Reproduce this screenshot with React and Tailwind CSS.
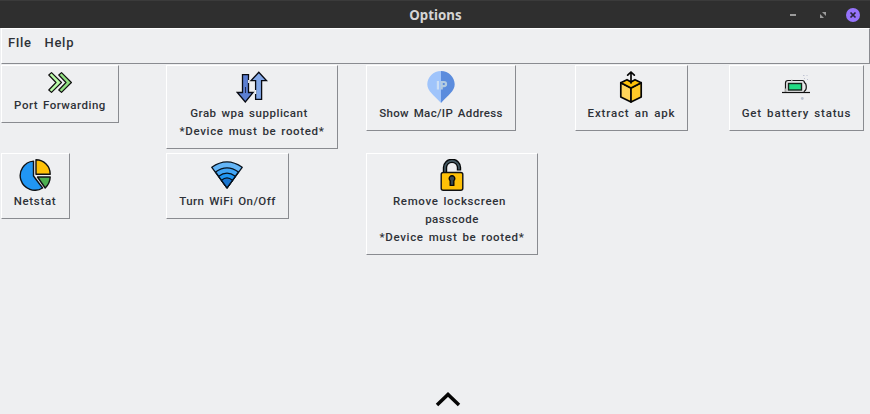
import React from "react";

function ForwardIcon() {
  return (
    <svg width="24" height="24" viewBox="0 0 24 24" stroke="#111" strokeWidth="1.2" strokeLinejoin="round">
      <path d="M0.8 4 3.5 1.6 13.5 11.5 3.5 21.4 0.8 19 8 11.5Z" fill="#b9fba8" />
      <path d="M10.8 4 13.5 1.6 23.4 11.5 13.5 21.4 10.8 19 18 11.5Z" fill="#92e083" />
    </svg>
  );
}

function TransferIcon() {
  return (
    <svg width="32" height="32" viewBox="0 0 32 32" stroke="#080a12" strokeWidth="1.300" strokeLinejoin="miter">
      <path d="M6.500 3.600h6v17.900h4.600L9.300 31 1.300 21.500h5.200Z" fill="#5c7fd3" />
      <path d="M19.600 28.400h6V9.700h5L22.800 1.200 15 9.700h4.600Z" fill="#83a8e8" />
      <path d="M12.700 9v3M19.600 19v4M14 6.500v2" stroke="#eeeff1" strokeWidth="1.300" />
      <path d="M9.500 16v6" stroke="#202a55" strokeWidth="1" />
    </svg>
  );
}

function PinIcon() {
  return (
    <svg width="32" height="32" viewBox="0 0 32 32">
      <path d="M16 0C8.400 0 2.300 6 2.300 13.300 2.300 20.500 9 24 16 32Z" fill="#9fc4fb" />
      <path d="M16 0c7.600 0 13.700 6 13.700 13.300C29.700 20.500 23 24 16 32Z" fill="#5b8cdd" />
      <path d="M12.900 10v8.500" stroke="#cddff5" strokeWidth="2.200" fill="none" />
      <path d="M16.700 18.500V11h2.300a2 2 0 0 1 0 4.100h-2.300" stroke="#b3cbe0" strokeWidth="2.200" fill="none" />
    </svg>
  );
}

function BoxIcon() {
  return (
    <svg className="mr-px" width="32" height="32" viewBox="0 0 32 32" stroke="#050505" strokeWidth="1.700" strokeLinejoin="round" strokeLinecap="round">
      <path d="M5.800 11.700 16 17v14L5.800 26Z" fill="#ffd45a" />
      <path d="M26.200 11.700 16 17v14l10.200-5Z" fill="#ffc928" />
      <path d="M5.800 11.700 12 8.700 16 11l4-2.300 6.200 3L16 17Z" fill="#ffc107" />
      <path d="M16 12V1M12.700 4.200 16 1l3.300 3.200" fill="none" />
    </svg>
  );
}

function BatteryIcon() {
  return (
    <svg className="ml-px" width="32" height="32" viewBox="0 0 32 32" fill="none">
      <path d="M4.500 21V12q0-2.500 2.500-2.500H21.500q1.800 0 2 2.300 1.800.7 1.800 4.200t-1.800 4l-.5 1" fill="#e6e6e8" stroke="#161616" strokeWidth="1.200" />
      <path d="M10 9.500h1.500M4.500 17.500V21" stroke="#aaa" strokeWidth="1.400" />
      <rect x="7.500" y="12.500" width="13" height="6.500" fill="#24dd85" stroke="#15251d" strokeWidth="1.400" />
      <path d="M1 21.500h28" stroke="#111" strokeWidth="1.200" />
      <path d="M22 4.500h1.500M25.500 4.500h1M23 7.500h1M26 8.500h1" stroke="#bfc2d2" strokeWidth="1" />
      <circle cx="21.300" cy="27.500" r="1.400" fill="#b9c1d0" />
    </svg>
  );
}

function PieIcon() {
  return (
    <svg className="mr-px" width="32" height="32" viewBox="0 0 32 32" stroke="#101214" strokeWidth="1.400" strokeLinejoin="round">
      <path d="M14.500 2.100A14.600 14.600 0 1 0 23.600 29L14.500 17Z" fill="#2196f3" />
      <path d="M17 .8A14.300 14.300 0 0 1 31.200 15.200H17Z" fill="#ffc107" />
      <path d="M18.500 18h12.700q-.2 6.300-5 11Z" fill="#4caf50" />
    </svg>
  );
}

function WifiIcon() {
  return (
    <svg className="mr-px" width="32" height="32" viewBox="0 0 32 32" stroke="#07121e" strokeWidth="1.300" strokeLinejoin="round">
      <path d="M.8 8.300Q16-2.500 31.200 8.300L16 28.800Z" fill="#64b5f6" />
      <path d="M4.500 13Q16 4.700 27.500 13L16 28.800Z" fill="#42a5f5" />
      <path d="M7.700 17.300Q16 11 24.300 17.300L16 28.800Z" fill="#2196f3" />
      <path d="M10.500 21.300Q16 16.500 21.500 21.300L16 28.800Z" fill="#1976d2" />
    </svg>
  );
}

function LockIcon() {
  return (
    <svg width="32" height="32" viewBox="0 0 32 32" strokeLinejoin="round">
      <path d="M9 14V8.500a7 6.700 0 0 1 14 0V11.500" stroke="#050708" strokeWidth="4.400" fill="none" />
      <path d="M9 14V8.500a7 6.700 0 0 1 14 0V10.500" stroke="#455a64" strokeWidth="1.700" fill="none" />
      <rect x="5.200" y="13.500" width="21.600" height="17.700" rx="2" fill="#ffc107" stroke="#111" strokeWidth="1.400" />
      <path d="M14.200 21.700a2.800 2.800 0 1 1 3.600 0v4.700h-3.600Z" fill="#37474f" stroke="#080808" strokeWidth="1.400" />
    </svg>
  );
}

function Label({ children, className }) {
  return <span className={`block whitespace-nowrap [word-spacing:1.5px] ${className}`}>{children}</span>;
}

function Tool({ icon, className, children }) {
  return (
    <button
      type="button"
      className={`flex flex-col items-center border border-t-white border-l-white border-r-[#898b90] border-b-[#898b90] pt-[5px] text-[11.5px] leading-[18px] font-medium ${className}`}
    >
      {icon}
      <span className="block pt-px">{children}</span>
    </button>
  );
}

export default function App() {
  return (
    <div className="flex h-[414px] w-[870px] flex-col overflow-hidden bg-[#eeeff1] font-['Roboto','Liberation_Sans',sans-serif] text-[#2e3238]">
      <header className="grid h-7 shrink-0 grid-cols-[1fr_auto_1fr] items-center border-t border-[#3b3b3b] bg-[#2f2f2f]">
        <span />
        <h1 className="pt-px pl-px font-['Noto_Sans',sans-serif] text-[13.300px] leading-5 font-bold text-[#d5d5d5]">Options</h1>
        <div className="flex items-center justify-end pr-[10px]">
          <svg width="70" height="14" viewBox="0 0 70 14">
            <path d="M0 7h6" stroke="#9b9b9b" strokeWidth="2" />
            <path d="M32 4h4v4ZM30 6v4h4Z" fill="#9b9b9b" />
            <circle cx="63" cy="7" r="7" fill="#9673fb" />
            <path d="m60.500 4.500 5 5m0-5-5 5" stroke="#29233d" strokeWidth="1.700" />
          </svg>
        </div>
      </header>
      <nav className="ml-px flex h-9 shrink-0 items-start gap-[13px] border border-t-white border-l-white border-r-[#898b90] border-b-[#898b90] pt-1 pl-[6px] text-[13px] leading-5 font-medium">
        <span className="tracking-[0.600px]">FIle</span>
        <span className="tracking-[0.700px]">Help</span>
      </nav>
      <main className="grid grid-cols-[165px_200px_209px_154px_135px] grid-rows-[88px_102px] items-start justify-items-start pt-px pl-px">
        <Tool icon={<ForwardIcon />} className="h-[58px] w-[118px]"><Label className="tracking-[0.500px]">Port Forwarding</Label></Tool>
        <Tool icon={<TransferIcon />} className="h-[84px] w-[172px]">
          <Label className="pr-[6px] tracking-[0.520px]">Grab wpa supplicant</Label>
          <Label className="tracking-[0.650px]">*Device must be rooted*</Label>
        </Tool>
        <Tool icon={<PinIcon />} className="h-[66px] w-[150px]"><Label className="tracking-[0.350px]">Show Mac/IP Address</Label></Tool>
        <Tool icon={<BoxIcon />} className="h-[66px] w-[113px]"><Label className="tracking-[0.850px]">Extract an apk</Label></Tool>
        <Tool icon={<BatteryIcon />} className="h-[66px] w-[135px]"><Label className="tracking-[0.820px]">Get battery status</Label></Tool>
        <Tool icon={<PieIcon />} className="h-[66px] w-[69px]"><Label className="pr-px tracking-[0.650px]">Netstat</Label></Tool>
        <Tool icon={<WifiIcon />} className="h-[66px] w-[123px]"><Label className="tracking-[0.450px]">Turn WiFi On/Off</Label></Tool>
        <Tool icon={<LockIcon />} className="h-[102px] w-[172px]">
          <Label className="pr-[5px] tracking-[0.650px]">Remove lockscreen</Label>
          <Label className="tracking-[0.500px]">passcode</Label>
          <Label className="tracking-[0.650px]">*Device must be rooted*</Label>
        </Tool>
      </main>
      <footer className="mt-auto flex justify-center pb-[7px] pl-[27px]">
        <svg width="50" height="16" viewBox="0 0 50 16" fill="none">
          <path d="m13 14 11-10.500L35 14" stroke="#050505" strokeWidth="3.500" />
        </svg>
      </footer>
    </div>
  );
}
